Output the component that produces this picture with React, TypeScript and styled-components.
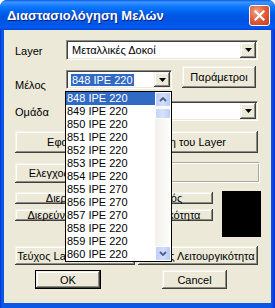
import React from 'react';
import styled, { createGlobalStyle, css } from 'styled-components';

// Dialog: "Διαστασιολόγηση Μελών" with an open member dropdown

const GlobalStyle = createGlobalStyle`
  html, body {
    margin: 0;
    padding: 0;
    background: #ffffff;
  }
  body {
    font-family: "Liberation Sans", Arial, sans-serif;
    font-size: 11px;
  }
`;

const bevel = css`
  box-shadow:
    inset -1px -1px 0 #404040,
    inset 1px 1px 0 #f4f2e8,
    inset -2px -2px 0 #8e8c82,
    inset 2px 2px 0 #ffffff;
`;

const Window = styled.div`
  width: 275px;
  height: 308px;
  display: flex;
  flex-direction: column;
  background: linear-gradient(90deg, #0831d9 0px, #0b58e6 2px, #0b58e6 271px, #0831d9 275px);
  border-radius: 7px 7px 0 0;
  overflow: hidden;
`;

const TitleBar = styled.div`
  height: 30px;
  flex-shrink: 0;
  display: flex;
  align-items: center;
  justify-content: space-between;
  padding: 0 5px 0 7px;
  background: linear-gradient(
    180deg,
    #0a5ae8 0px,
    #3d95ff 2px,
    #2a8bff 4px,
    #137dff 6px,
    #0470fb 9px,
    #0262ee 12px,
    #0056e4 16px,
    #0054e3 21px,
    #0057eb 25px,
    #005cf4 27px,
    #0047d4 30px
  );
`;

const Title = styled.span`
  color: #ffffff;
  font: bold 13px "Liberation Sans", Arial, sans-serif;
  text-shadow: 1px 1px 0 #0a1f73;
  white-space: nowrap;
`;

const CloseButton = styled.div`
  width: 21px;
  height: 21px;
  box-sizing: border-box;
  border: 1px solid #ffffff;
  border-radius: 3px;
  background: radial-gradient(circle at 35% 30%, #f1a58c 0%, #e2603e 45%, #c63c1d 100%);
  display: flex;
  align-items: center;
  justify-content: center;
`;

const Body = styled.div`
  position: relative;
  flex: 1;
  margin: 0 4px 5px;
  background: #ece9d8;
  padding: 10px 13px 0 11px;
  display: flex;
  flex-direction: column;
`;

const Row = styled.div<{ $mt: number; $h: number }>`
  display: flex;
  align-items: flex-start;
  height: ${p => p.$h}px;
  margin-top: ${p => p.$mt}px;
`;

const Label = styled.span<{ $mt: number }>`
  width: 51px;
  flex-shrink: 0;
  line-height: 13px;
  margin-top: ${p => p.$mt}px;
  color: #000000;
  white-space: nowrap;
`;

const Combo = styled.div<{ $w?: number; $h?: number; $mt?: number }>`
  box-sizing: border-box;
  ${p => (p.$w ? `width: ${p.$w}px; flex: none;` : 'flex: 1;')}
  height: ${p => p.$h ?? 20}px;
  margin-top: ${p => p.$mt ?? 0}px;
  background: #ffffff;
  border: 1px solid;
  border-color: #8e8c82 #ffffff #ffffff #8e8c82;
  box-shadow: inset 1px 1px 0 #404040, inset -1px -1px 0 #ece9d8;
  display: flex;
  align-items: center;
  padding: 1px 1px 1px 5px;
`;

const ComboText = styled.span<{ $selected?: boolean }>`
  flex: 1;
  white-space: nowrap;
  color: #000000;
  ${p =>
    p.$selected &&
    css`
      flex: none;
      margin-left: -1px;
      padding: 0 1px;
      line-height: 12px;
      background: #316ac5;
      color: #ffffff;
    `}
`;

const DropButton = styled.div`
  width: 16px;
  height: 100%;
  flex-shrink: 0;
  margin-left: auto;
  box-sizing: border-box;
  background: #ece9d8;
  ${bevel};
  display: flex;
  align-items: center;
  justify-content: center;
`;

const Button = styled.button<{ $w?: number; $h: number; $mt?: number; $default?: boolean }>`
  box-sizing: border-box;
  ${p => (p.$w ? `width: ${p.$w}px; flex: none;` : 'flex: 1;')}
  height: ${p => p.$h}px;
  margin: ${p => p.$mt ?? 0}px 0 0 0;
  padding: 0;
  border: none;
  background: #ece9d8;
  font: 11px "Liberation Sans", Arial, sans-serif;
  color: #000000;
  white-space: nowrap;
  overflow: hidden;
  ${bevel};
  ${p =>
    p.$default &&
    css`
      box-shadow:
        inset 0 0 0 1px #000000,
        inset -2px -2px 0 #404040,
        inset 2px 2px 0 #f4f2e8,
        inset -3px -3px 0 #8e8c82,
        inset 3px 3px 0 #ffffff;
    `}
`;

const Etched = styled.div<{ $ml: number }>`
  flex: 1;
  height: 21px;
  margin-left: ${p => p.$ml}px;
  margin-right: -2px;
  box-sizing: border-box;
  border: 1px solid;
  border-color: #aca899 #ffffff #ffffff #aca899;
  box-shadow: inset 1px 1px 0 #ffffff, inset -1px -1px 0 #aca899;
`;

const ButtonStack = styled.div`
  width: 198px;
  flex-shrink: 0;
  display: flex;
  flex-direction: column;
  gap: 5px;
  padding-top: 1px;
`;

const ColorSwatch = styled.div`
  width: 39px;
  height: 46px;
  flex-shrink: 0;
  margin-left: 9px;
  background: #000000;
`;

const ListBox = styled.div`
  position: absolute;
  left: 61px;
  top: 61px;
  width: 107px;
  height: 171px;
  box-sizing: border-box;
  border: 1px solid #000000;
  background: #ffffff;
  display: flex;
`;

const Items = styled.div`
  flex: 1;
  display: flex;
  flex-direction: column;
`;

const Item = styled.div<{ $selected?: boolean }>`
  height: 13px;
  line-height: 13px;
  padding-left: 1px;
  white-space: nowrap;
  color: ${p => (p.$selected ? '#ffffff' : '#000000')};
  background: ${p => (p.$selected ? '#316ac5' : 'transparent')};
`;

const ScrollBar = styled.div`
  width: 16px;
  flex-shrink: 0;
  display: flex;
  flex-direction: column;
  background: linear-gradient(90deg, #f3f1ec, #fefefb);
`;

const ScrollArrow = styled.div<{ $down?: boolean }>`
  height: 15px;
  box-sizing: border-box;
  margin: 0 0 1px;
  border: 1px solid #ffffff;
  border-radius: 2px;
  background: linear-gradient(90deg, #bccefa, #d2defc 50%, #b6cbf6);
  display: flex;
  align-items: center;
  justify-content: center;
  ${p => p.$down && 'margin-top: auto; margin-bottom: 0;'}
`;

const Thumb = styled.div`
  height: 11px;
  box-sizing: border-box;
  border: 1px solid #ffffff;
  border-radius: 2px;
  background: linear-gradient(90deg, #c4d4fc, #d6e1fd 50%, #bccdf7);
`;

const Arrow = () => (
  <svg width="7" height="4" viewBox="0 0 7 4">
    <polygon points="0,0 7,0 3.5,4" fill="#000000" />
  </svg>
);

const Chevron = ({ down }: { down?: boolean }) => (
  <svg width="8" height="5" viewBox="0 0 8 5">
    <polyline
      points={down ? '1,1 4,4 7,1' : '1,4 4,1 7,4'}
      fill="none"
      stroke="#4d6185"
      strokeWidth="1.8"
    />
  </svg>
);

const members = [
  '848 IPE 220',
  '849 IPE 220',
  '850 IPE 220',
  '851 IPE 220',
  '852 IPE 220',
  '853 IPE 220',
  '854 IPE 220',
  '855 IPE 270',
  '856 IPE 270',
  '857 IPE 270',
  '858 IPE 220',
  '859 IPE 220',
  '860 IPE 220',
];

export default function App() {
  return (
    <>
      <GlobalStyle />
      <Window>
        <TitleBar>
          <Title>Διαστασιολόγηση Μελών</Title>
          <CloseButton>
            <svg width="11" height="11" viewBox="0 0 11 11">
              <path d="M1.5 1.5 L9.5 9.5 M9.5 1.5 L1.5 9.5" stroke="#ffffff" strokeWidth="2.2" strokeLinecap="square" />
            </svg>
          </CloseButton>
        </TitleBar>

        <Body>
          <Row $mt={0} $h={20}>
            <Label $mt={5}>Layer</Label>
            <Combo>
              <ComboText>Μεταλλικές Δοκοί</ComboText>
              <DropButton><Arrow /></DropButton>
            </Combo>
          </Row>

          <Row $mt={6} $h={22}>
            <Label $mt={13}>Μέλος</Label>
            <Combo $w={106} $h={19} $mt={4}>
              <ComboText $selected>848 IPE 220</ComboText>
              <DropButton><Arrow /></DropButton>
            </Combo>
            <Button $w={74} $h={22} style={{ marginLeft: 10 }}>Παράμετροι</Button>
          </Row>

          <Row $mt={13} $h={20}>
            <Label $mt={5}>Ομάδα</Label>
            <Combo>
              <ComboText />
              <DropButton><Arrow /></DropButton>
            </Combo>
          </Row>

          <Row $mt={10} $h={22}>
            <Button $h={22}>Εφαρμογή σε όλα τα Μέλη του Layer</Button>
          </Row>

          <Row $mt={9} $h={21}>
            <Button $w={104} $h={20} $mt={1}>Ελεγχος Μελών</Button>
            <Etched $ml={4} />
          </Row>

          <Row $mt={8} $h={49}>
            <ButtonStack>
              <Button $h={21}>Διερεύνηση Μελών Στατικός</Button>
              <Button $h={22}>Διερεύνηση Μελών Λειτουργικότητα</Button>
            </ButtonStack>
            <ColorSwatch />
          </Row>

          <Row $mt={6} $h={19}>
            <Button $w={120} $h={19}>Τεύχος Layer σε Αντοχή</Button>
            <Button $w={120} $h={19} style={{ marginLeft: 3 }}>Τεύχος Λειτουργικότητα</Button>
          </Row>

          <Row $mt={5} $h={19}>
            <Button $w={66} $h={19} $default style={{ marginLeft: 20 }}>OK</Button>
            <Button $w={65} $h={19} style={{ marginLeft: 61 }}>Cancel</Button>
          </Row>

          <ListBox>
            <Items>
              {members.map((m, i) => (
                <Item key={m + i} $selected={i === 0}>{m}</Item>
              ))}
            </Items>
            <ScrollBar>
              <ScrollArrow><Chevron /></ScrollArrow>
              <Thumb />
              <ScrollArrow $down><Chevron down /></ScrollArrow>
            </ScrollBar>
          </ListBox>
        </Body>
      </Window>
    </>
  );
}
